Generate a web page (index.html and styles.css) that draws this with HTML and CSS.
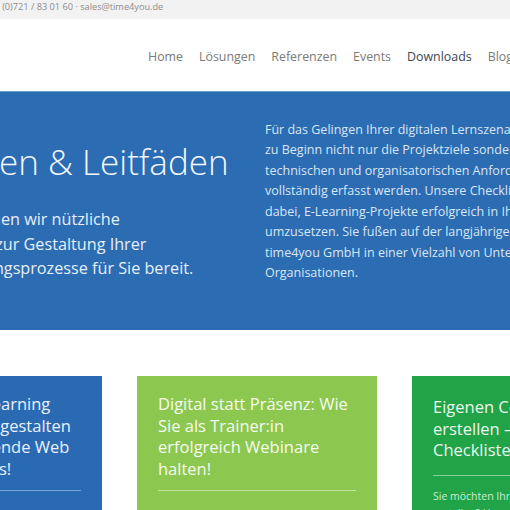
FILE: index.html
```html
<!DOCTYPE html>
<html lang="de">
<head>
<meta charset="utf-8">
<title>Checklisten &amp; Leitfäden – time4you</title>
<link rel="stylesheet" href="styles.css">
</head>
<body>
<div class="topbar"><span class="contact">+49 (0)721 / 83 01 60 · sales@time4you.de</span></div>
<header class="header">
  <nav class="nav">
    <a class="nav-item">Home</a>
    <a class="nav-item">Lösungen</a>
    <a class="nav-item">Referenzen</a>
    <a class="nav-item">Events</a>
    <a class="nav-item active">Downloads</a>
    <a class="nav-item">Blog</a>
    <a class="nav-item">Kontakt</a>
  </nav>
</header>
<div class="page">
  <section class="hero">
    <div class="hero-left">
      <h1 class="hero-title">Checklisten &amp; Leitfäden</h1>
      <p class="hero-lead">Regelmäßig stellen wir nützliche<br>Hilfestellungen zur Gestaltung Ihrer<br>Lern- und Bildungsprozesse für Sie bereit.</p>
    </div>
    <div class="hero-right">
      <p class="hero-text">Für das Gelingen Ihrer digitalen Lernszenarien ist es wichtig, dass<br>zu Beginn nicht nur die Projektziele sondern auch alle<br>technischen und organisatorischen Anforderungen<br>vollständig erfasst werden. Unsere Checklisten helfen Ihnen<br>dabei, E-Learning-Projekte erfolgreich in Ihrem Unternehmen<br>umzusetzen. Sie fußen auf der langjährigen Erfahrung der<br>time4you GmbH in einer Vielzahl von Unternehmen und<br>Organisationen.</p>
    </div>
  </section>
  <section class="cards">
    <article class="card card-blue">
      <h2 class="card-title"><span class="cut w118"><span>Wie Sie Ihr E-Le</span></span>arning<br><span class="cut w113"><span>motivierend</span></span> gestalten<br><span class="cut w118"><span>durch spanne</span></span>nde Web<br><span class="cut w116"><span>Based Training</span></span>s!</h2>
      <hr class="card-rule">
    </article>
    <article class="card card-lime">
      <h2 class="card-title">Digital statt Präsenz: Wie<br>Sie als Trainer:in<br>erfolgreich Webinare<br>halten!</h2>
      <hr class="card-rule">
    </article>
    <article class="card card-green">
      <h2 class="card-title">Eigenen Content<br>erstellen – die<br>Checkliste</h2>
      <hr class="card-rule">
      <p class="card-text">Sie möchten Ihre Lerninhalte selbst<br>erstellen? Unsere Checkliste hilft.</p>
    </article>
  </section>
</div>
</body>
</html>
```
FILE: styles.css
```css
html, body {
  margin: 0;
  padding: 0;
}
body {
  width: 510px;
  height: 510px;
  overflow: hidden;
  font-family: "Open Sans", "Noto Sans", "DejaVu Sans", sans-serif;
  background: #ffffff;
}
.topbar {
  height: 19px;
  background: #f2f2f2;
  overflow: hidden;
  white-space: nowrap;
}
.contact {
  display: block;
  margin-left: -16px;
  font-size: 9.2px;
  line-height: 13px;
  color: #8d8d8d;
}
.header {
  box-sizing: border-box;
  height: 72px;
  padding-top: 2px;
  display: flex;
  align-items: center;
  background: #ffffff;
  overflow: hidden;
}
.nav {
  display: flex;
  gap: 16px;
  padding-left: 148px;
  white-space: nowrap;
}
.nav-item {
  font-size: 12.4px;
  color: #7a7a7a;
  text-decoration: none;
}
.nav-item.active {
  color: #3d4654;
}
.page {
  margin-left: -138px;
  width: 1200px;
}
.hero {
  box-sizing: border-box;
  height: 239px;
  border-top: 1px solid #6c9bcd;
  background: #2b6cb3;
  display: grid;
  grid-template-columns: 387px 1fr;
  padding-left: 16px;
}
.hero-left {
  padding-top: 50px;
  white-space: nowrap;
}
.hero-title {
  margin: 0 0 0 -18px;
  font-size: 35px;
  line-height: 40px;
  font-weight: 300;
  color: #f3f7fc;
}
.hero-lead {
  margin: 25px 0 0;
  font-size: 16.2px;
  line-height: 24.5px;
  color: #e8eff8;
}
.hero-right {
  padding-top: 27.5px;
  white-space: nowrap;
}
.hero-text {
  margin: 0;
  font-size: 12.5px;
  line-height: 20.5px;
  color: #dae6f5;
}
.cards {
  display: flex;
  gap: 35px;
  margin-top: 46px;
}
.card {
  box-sizing: border-box;
  width: 240px;
  height: 200px;
  padding: 17px 21px 0;
  white-space: nowrap;
}
.card-blue { background: #2a6ab3; color: #eaf1fa; }
.card-lime { background: #8cc850; color: #f6fbef; }
.card-green { background: #21a348; color: #ecf8ef; padding-top: 20px; }
.card-title {
  margin: 0;
  font-size: 16.5px;
  line-height: 21.5px;
  font-weight: 400;
}
.cut {
  display: inline-flex;
  justify-content: flex-end;
  overflow: hidden;
  vertical-align: top;
  white-space: nowrap;
}
.cut > span { flex: none; }
.w113 { width: 113px; }
.w116 { width: 116px; }
.w118 { width: 118px; }
.card-rule {
  margin: 11px 0 0;
  border: 0;
  height: 1px;
}
.card-blue .card-rule { background: #7aa6d8; }
.card-lime .card-rule { background: #c1e19c; }
.card-green .card-rule { background: #80d096; margin-top: 14px; }
.card-text {
  margin: 12px 0 0;
  font-size: 10.5px;
  line-height: 17px;
  color: #c9ecd2;
}
```
